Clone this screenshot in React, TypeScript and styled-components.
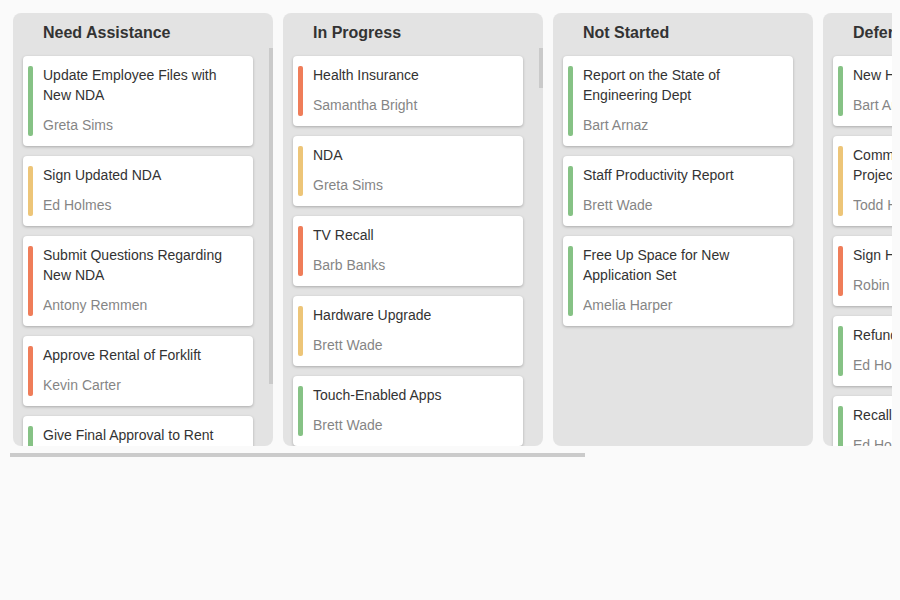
import React from "react";
import styled, { createGlobalStyle } from "styled-components";

const GlobalStyle = createGlobalStyle`
  html, body {
    margin: 0;
    padding: 0;
    background: #fafafa;
  }
  body {
    padding: 8px;
    font-family: "Liberation Sans", Arial, Helvetica, sans-serif;
    color: #333;
    font-size: 14px;
  }
`;

type Priority = "low" | "normal" | "high";

const priorityColor: Record<Priority, string> = {
  low: "#86c285",
  normal: "#edc578",
  high: "#ef7d59",
};

interface Task {
  subject: string;
  assignee: string;
  priority: Priority;
}

interface ListData {
  title: string;
  tasks: Task[];
  thumb?: { top: number; height: number };
}

const lists: ListData[] = [
  {
    title: "Need Assistance",
    thumb: { top: 2, height: 336 },
    tasks: [
      { subject: "Update Employee Files with New NDA", assignee: "Greta Sims", priority: "low" },
      { subject: "Sign Updated NDA", assignee: "Ed Holmes", priority: "normal" },
      { subject: "Submit Questions Regarding New NDA", assignee: "Antony Remmen", priority: "high" },
      { subject: "Approve Rental of Forklift", assignee: "Kevin Carter", priority: "high" },
      { subject: "Give Final Approval to Rent Forklift", assignee: "Kevin Carter", priority: "low" },
    ],
  },
  {
    title: "In Progress",
    thumb: { top: 2, height: 40 },
    tasks: [
      { subject: "Health Insurance", assignee: "Samantha Bright", priority: "high" },
      { subject: "NDA", assignee: "Greta Sims", priority: "normal" },
      { subject: "TV Recall", assignee: "Barb Banks", priority: "high" },
      { subject: "Hardware Upgrade", assignee: "Brett Wade", priority: "normal" },
      { subject: "Touch-Enabled Apps", assignee: "Brett Wade", priority: "low" },
    ],
  },
  {
    title: "Not Started",
    tasks: [
      { subject: "Report on the State of Engineering Dept", assignee: "Bart Arnaz", priority: "low" },
      { subject: "Staff Productivity Report", assignee: "Brett Wade", priority: "low" },
      { subject: "Free Up Space for New Application Set", assignee: "Amelia Harper", priority: "low" },
    ],
  },
  {
    title: "Deferred",
    tasks: [
      { subject: "New Hardware", assignee: "Bart Arnaz", priority: "low" },
      { subject: "Comment on Revised Projections", assignee: "Todd Hoffman", priority: "normal" },
      { subject: "Sign Hiring Plans", assignee: "Robin Cosworth", priority: "high" },
      { subject: "Refund Request", assignee: "Ed Holmes", priority: "low" },
      { subject: "Recall Rebate Form", assignee: "Ed Holmes", priority: "low" },
    ],
  },
  {
    title: "Rejected",
    tasks: [
      { subject: "Prepare Budget", assignee: "Sandra Johnson", priority: "low" },
    ],
  },
];

const Board = styled.div`
  width: 884px;
`;

const ListsViewport = styled.div`
  width: 884px;
  overflow: hidden;
`;

const ListsRow = styled.div`
  display: flex;
  width: max-content;
`;

const List = styled.div`
  flex: 0 0 auto;
  width: 260px;
  margin: 5px;
  border-radius: 8px;
  background-color: rgba(192, 192, 192, 0.4);
  display: flex;
  flex-direction: column;
`;

const ListTitle = styled.div`
  font-size: 16px;
  font-weight: bold;
  line-height: 19px;
  padding: 10px 10px 4px 30px;
  color: #333;
`;

const ScrollArea = styled.div`
  position: relative;
  height: 400px;
  overflow: hidden;
`;

const Cards = styled.div`
  display: flex;
  flex-direction: column;
  gap: 10px;
  padding: 10px;
`;

const Card = styled.div`
  position: relative;
  box-sizing: border-box;
  width: 230px;
  padding: 9px 20px 11px;
  background: #fff;
  border-radius: 4px;
  box-shadow: 0 1px 3px rgba(0, 0, 0, 0.25);
`;

const PriorityBar = styled.div<{ $color: string }>`
  position: absolute;
  top: 10px;
  bottom: 10px;
  left: 5px;
  width: 5px;
  border-radius: 2px;
  background: ${(p) => p.$color};
`;

const Subject = styled.div`
  line-height: 20px;
  padding-bottom: 10px;
  color: #333;
`;

const Assignee = styled.div`
  line-height: 20px;
  color: #333;
  opacity: 0.6;
`;

const VThumb = styled.div`
  position: absolute;
  right: 0;
  width: 4px;
  background: #c6c6c6;
  opacity: 0.9;
`;

const HScrollbar = styled.div`
  margin: 2px 0 0 2px;
  width: 575px;
  height: 4px;
  background: #cbcbcb;
`;

export default function App() {
  return (
    <>
      <GlobalStyle />
      <Board>
        <ListsViewport>
          <ListsRow>
            {lists.map((list) => (
              <List key={list.title}>
                <ListTitle>{list.title}</ListTitle>
                <ScrollArea>
                  <Cards>
                    {list.tasks.map((t) => (
                      <Card key={t.subject}>
                        <PriorityBar $color={priorityColor[t.priority]} />
                        <Subject>{t.subject}</Subject>
                        <Assignee>{t.assignee}</Assignee>
                      </Card>
                    ))}
                  </Cards>
                  {list.thumb && (
                    <VThumb style={{ top: list.thumb.top, height: list.thumb.height }} />
                  )}
                </ScrollArea>
              </List>
            ))}
          </ListsRow>
        </ListsViewport>
        <HScrollbar />
      </Board>
    </>
  );
}
